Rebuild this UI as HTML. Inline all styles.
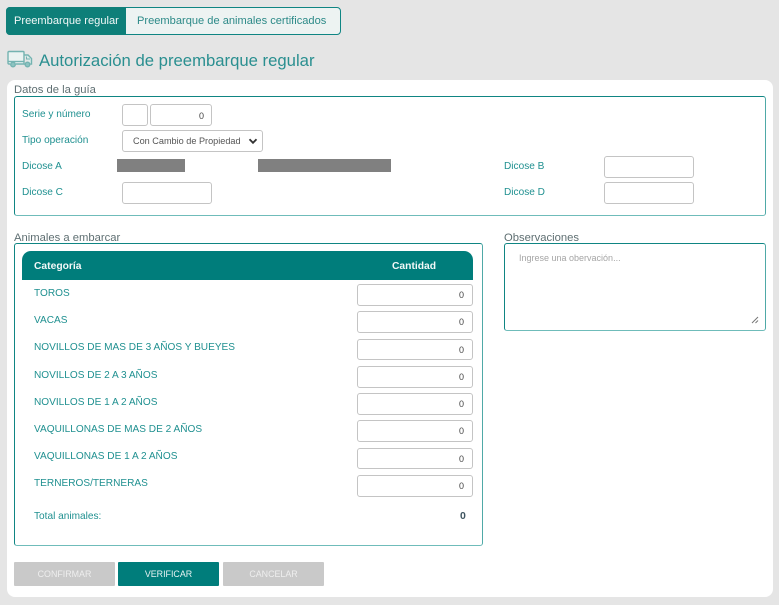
<!DOCTYPE html>
<html lang="es">
<head>
<meta charset="utf-8">
<title>Autorización de preembarque regular</title>
<style>
html,body{margin:0;padding:0;background:#e5e5e5;}
body{position:relative;width:779px;height:605px;overflow:hidden;font-family:"Liberation Sans",sans-serif;font-size:11px;color:#1a8a8a;}
.a{position:absolute;white-space:nowrap;box-sizing:border-box;}
.inp{position:absolute;box-sizing:border-box;background:#fff;border:1px solid #c4c4c4;border-radius:3px;text-align:right;color:#444;font-size:9px;padding-right:9px;}
.lab{position:absolute;white-space:nowrap;font-size:10.1px;color:#1f9090;line-height:12px;margin-top:1px;}
.leg{position:absolute;white-space:nowrap;font-size:11.25px;color:#5f6f72;line-height:14px;}
.box{position:absolute;box-sizing:border-box;background:#fff;border:1px solid #0f8583;border-bottom-color:#6fbcba;border-right-color:#4fa9a7;border-radius:3px;}
.btn{position:absolute;box-sizing:border-box;top:562px;width:101px;height:24px;background:#c9c9c9;color:#eee;text-align:center;line-height:25px;font-size:8.9px;border-radius:1px;}
.gray{position:absolute;background:#808080;top:159px;height:13px;}
</style>
</head>
<body>
<div class="a" style="left:6px;top:7px;width:335px;height:28px;border:1px solid #0f8583;border-radius:4px;background:#edf3f2;"></div>
<div class="a" style="left:6px;top:7px;width:120px;height:28px;background:#0e7f79;border-radius:4px 0 0 4px;font-size:11.1px;line-height:28px;padding-left:8px;color:#f2f8f8;">Preembarque regular</div>
<div class="a" style="left:137px;top:7px;height:28px;line-height:28px;font-size:11.1px;color:#2c8a88;">Preembarque de animales certificados</div>

<svg class="a" style="left:7px;top:50px" width="26" height="18" viewBox="0 0 26 18" fill="none" stroke="#74b3b1" stroke-width="1.4">
<path d="M3 14H2Q1 14 1 13V2.500Q1 1.500 2 1.500H16Q17 1.500 17 2.500V14H9" fill="#eaf3f2"/>
<path d="M1 11.500H17"/>
<path d="M17 5H21L24.500 8.500V14H23.500M17 14H17.500" fill="#dcecea"/>
<circle cx="6" cy="14.500" r="2.300" fill="#8cc3c1"/>
<circle cx="20.500" cy="14.500" r="2.300" fill="#8cc3c1"/>
<path d="M19.500 6.500V9H23" stroke-width="1"/>
</svg>
<div class="a" style="left:39px;top:50px;font-size:16.7px;line-height:21px;color:#2a8f90;">Autorización de preembarque regular</div>

<div class="a" style="left:7px;top:80px;width:766px;height:517px;background:#fff;border-radius:8px;"></div>

<div class="leg" style="left:14px;top:83px;">Datos de la guía</div>
<div class="box" style="left:14px;top:96px;width:752px;height:120px;"></div>

<div class="lab" style="left:22px;top:108px;">Serie y número</div>
<div class="inp" style="left:122px;top:104px;width:26px;height:22px;"></div>
<div class="inp" style="left:150px;top:104px;width:62px;height:22px;line-height:22px;padding-right:7px;">0</div>

<div class="lab" style="left:22px;top:134px;">Tipo operación</div>
<div class="inp" style="left:122px;top:130px;width:141px;height:22px;text-align:left;padding-left:10px;line-height:21px;font-size:9.15px;color:#555;">Con Cambio de Propiedad
<svg style="position:absolute;left:125px;top:7px" width="10" height="7" viewBox="0 0 10 7" fill="none" stroke="#333" stroke-width="1.800"><path d="M1.500 1.200 5 4.800 8.500 1.200"/></svg>
</div>

<div class="lab" style="left:22px;top:160px;">Dicose A</div>
<div class="gray" style="left:117px;width:68px;"></div>
<div class="gray" style="left:258px;width:133px;"></div>
<div class="lab" style="left:504px;top:160px;">Dicose B</div>
<div class="inp" style="left:604px;top:156px;width:90px;height:22px;"></div>

<div class="lab" style="left:22px;top:186px;">Dicose C</div>
<div class="inp" style="left:122px;top:182px;width:90px;height:21.500px;"></div>
<div class="lab" style="left:504px;top:186px;">Dicose D</div>
<div class="inp" style="left:604px;top:182px;width:90px;height:21.500px;"></div>

<div class="leg" style="left:14px;top:231px;">Animales a embarcar</div>
<div class="box" style="left:14px;top:243px;width:469px;height:303px;"></div>

<div class="a" style="left:22px;top:251px;width:451px;height:29px;background:#007d7b;border-radius:9px 9px 0 0;color:#f2f8f8;font-weight:bold;font-size:10.300px;line-height:31px;padding-left:12px;">Categoría</div>
<div class="a" style="left:392px;top:251px;height:29px;color:#f2f8f8;font-weight:bold;font-size:10.300px;line-height:31px;">Cantidad</div>

<div class="lab" style="left:34px;top:287px;">TOROS</div>
<div class="inp" style="left:357px;top:284px;width:116px;height:21.500px;line-height:21px;padding-right:8px;">0</div>
<div class="lab" style="left:34px;top:314px;">VACAS</div>
<div class="inp" style="left:357px;top:311px;width:116px;height:21.500px;line-height:21px;padding-right:8px;">0</div>
<div class="lab" style="left:34px;top:341px;">NOVILLOS DE MAS DE 3 AÑOS Y BUEYES</div>
<div class="inp" style="left:357px;top:338.500px;width:116px;height:21.500px;line-height:21px;padding-right:8px;">0</div>
<div class="lab" style="left:34px;top:369px;">NOVILLOS DE 2 A 3 AÑOS</div>
<div class="inp" style="left:357px;top:366px;width:116px;height:21.500px;line-height:21px;padding-right:8px;">0</div>
<div class="lab" style="left:34px;top:396px;">NOVILLOS DE 1 A 2 AÑOS</div>
<div class="inp" style="left:357px;top:393px;width:116px;height:21.500px;line-height:21px;padding-right:8px;">0</div>
<div class="lab" style="left:34px;top:423px;">VAQUILLONAS DE MAS DE 2 AÑOS</div>
<div class="inp" style="left:357px;top:420px;width:116px;height:21.500px;line-height:21px;padding-right:8px;">0</div>
<div class="lab" style="left:34px;top:450px;">VAQUILLONAS DE 1 A 2 AÑOS</div>
<div class="inp" style="left:357px;top:447.500px;width:116px;height:21.500px;line-height:21px;padding-right:8px;">0</div>
<div class="lab" style="left:34px;top:477px;">TERNEROS/TERNERAS</div>
<div class="inp" style="left:357px;top:475px;width:116px;height:21.500px;line-height:21px;padding-right:8px;">0</div>

<div class="lab" style="left:34px;top:510px;">Total animales:</div>
<div class="a" style="left:460px;top:510px;font-size:10.500px;line-height:12px;font-weight:bold;color:#3f5560;">0</div>

<div class="leg" style="left:504px;top:231px;">Observaciones</div>
<div class="box" style="left:504px;top:243px;width:262px;height:88px;"></div>
<div class="a" style="left:519px;top:252px;font-size:9px;line-height:12px;color:#a5a5a5;">Ingrese una obervación...</div>
<svg class="a" style="left:751px;top:316px" width="8" height="8" viewBox="0 0 8 8" fill="none" stroke="#777" stroke-width="1"><path d="M1 7 7 1M4.500 7 7 4.500"/></svg>

<div class="btn" style="left:14px;">CONFIRMAR</div>
<div class="btn" style="left:118px;background:#007d7b;color:#e8f3f3;">VERIFICAR</div>
<div class="btn" style="left:223px;">CANCELAR</div>
</body>
</html>
